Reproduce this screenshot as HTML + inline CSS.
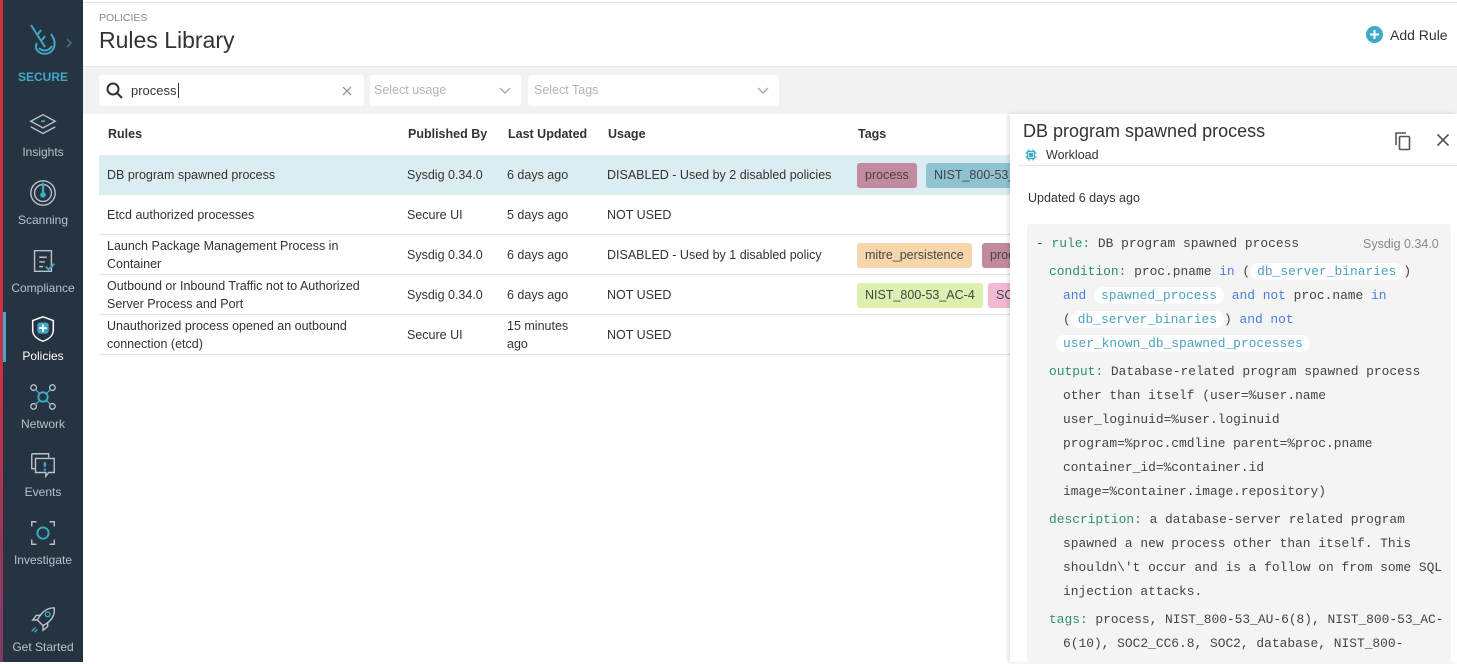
<!DOCTYPE html>
<html><head><meta charset="utf-8"><style>
*{box-sizing:border-box;margin:0;padding:0}
body{width:1457px;height:662px;overflow:hidden;font-family:"Liberation Sans",sans-serif;background:#fff;position:relative;color:#333}
.strip{position:absolute;left:0;top:0;width:3px;height:662px;background:linear-gradient(#d2303f,#c8304a 60%,#7a3a6a)}
.side{position:absolute;left:3px;top:0;width:80px;height:662px;background:#263442}
.nav{position:absolute;left:0;width:80px;text-align:center;color:#b8c2cc;font-size:12px}
.nav svg{display:block;margin:0 auto 5px}
.act{position:absolute;left:0;top:312px;width:3px;height:50px;background:#3fa9c8}
.t{position:absolute;white-space:nowrap}
.band{position:absolute;left:83px;top:66px;width:1374px;height:48px;background:#f2f2f2;border-top:1px solid #e6e6e6}
.inp{position:absolute;top:75px;height:31px;background:#fff;border-radius:3px}
.row{position:absolute;left:99px;width:911px;height:40px;border-bottom:1px solid #e3e3e3}
.c{position:absolute;font-size:12.5px;line-height:18px;white-space:nowrap}
.tag{position:absolute;height:25px;border-radius:3px;font-size:12.5px;line-height:25px;padding:0 8px;color:#444;white-space:nowrap;overflow:hidden}
.panel{position:absolute;left:1010px;top:114px;width:447px;height:548px;background:#fff;box-shadow:-2px 0 4px rgba(0,0,0,.12)}
.code{position:absolute;left:17px;top:110px;width:424px;height:440px;background:#f4f4f4;border-radius:3px;font-family:"Liberation Mono",monospace;font-size:12.9px;color:#444}
.code div{position:absolute;white-space:nowrap;line-height:24px}
.k{color:#2f8f6f}.b{color:#4a7ee0}.p{color:#4aa3c0;background:#fff;border-radius:10px;padding:1px 7px}
</style></head><body>
<div class="strip"></div>
<div class="side">
 <svg style="position:absolute;left:22px;top:20px" width="40" height="40" viewBox="0 0 40 40" fill="none" stroke="#3fa9c8" stroke-width="2"><path d="M6 5 L20 27"/><path d="M13 14 L16 10 M17 20 L20 16"/><path d="M12 23 C8 30 16 36 24 33 C30 30 32 22 26 14"/><path d="M14 28 C18 32 24 31 27 26"/></svg>
 <svg style="position:absolute;left:62px;top:37px" width="8" height="12"><path d="M2 2 L6 6 L2 10" stroke="#3f6f88" stroke-width="1.6" fill="none"/></svg>
 <div class="t" style="left:0;width:80px;text-align:center;top:70px;color:#3fa9c8;font-weight:bold;font-size:12px">SECURE</div>
 <div class="nav" style="top:110px"><svg width="30" height="30" viewBox="0 0 32 32" fill="none" stroke="#b8c2cc" stroke-width="1.5"><path d="M16 5 L29 12 L16 19 L3 12Z"/><path d="M3 18 L16 25 L29 18"/><path d="M14 11 h4 v2 h-4z" fill="#3fa9c8" stroke="none"/></svg>Insights</div>
 <div class="nav" style="top:178px"><svg width="30" height="30" viewBox="0 0 32 32" fill="none" stroke="#b8c2cc" stroke-width="1.5"><circle cx="16" cy="16" r="13"/><circle cx="16" cy="16" r="9"/><path d="M16 5 V17" stroke="#3fa9c8" stroke-width="2.5"/><circle cx="16" cy="18" r="3" fill="#3fa9c8" stroke="none"/></svg>Scanning</div>
 <div class="nav" style="top:246px"><svg width="30" height="30" viewBox="0 0 32 32" fill="none" stroke="#b8c2cc" stroke-width="1.5"><path d="M7 5 H25 V27 H7Z"/><path d="M12 12 H20 M12 17 H18 M12 22 H16"/><path d="M19 22 L22 25 L28 19" stroke="#3fa9c8" stroke-width="2"/></svg>Compliance</div>
 <div class="act"></div>
 <div class="nav" style="top:314px;color:#fff"><svg width="30" height="30" viewBox="0 0 32 32" fill="none" stroke="#fff" stroke-width="1.6"><path d="M16 3 L27 7 V17 C27 23 22 27 16 29 C10 27 5 23 5 17 V7Z"/><rect x="10" y="9" width="12" height="12" rx="3" fill="#3fa9c8" stroke="none"/><path d="M16 11 V19 M12 15 H20" stroke="#fff" stroke-width="2"/></svg>Policies</div>
 <div class="nav" style="top:382px"><svg width="30" height="30" viewBox="0 0 32 32" fill="none" stroke="#b8c2cc" stroke-width="1.4"><circle cx="6" cy="6" r="3"/><circle cx="26" cy="6" r="3"/><circle cx="6" cy="26" r="3"/><circle cx="26" cy="26" r="3"/><circle cx="16" cy="16" r="5" stroke="#3fa9c8" stroke-width="2"/><path d="M8 8 L12 12 M24 8 L20 12 M8 24 L12 20 M24 24 L20 20" stroke="#3fa9c8"/></svg>Network</div>
 <div class="nav" style="top:450px"><svg width="30" height="30" viewBox="0 0 32 32" fill="none" stroke="#b8c2cc" stroke-width="1.5"><path d="M4 4 H22 V8"/><path d="M4 4 V20 H8"/><path d="M8 9 H28 V24 H22 L19 28 V24 H8Z"/><path d="M18 13 V18" stroke="#3fa9c8" stroke-width="2.5"/><circle cx="18" cy="21" r="1.3" fill="#3fa9c8" stroke="none"/></svg>Events</div>
 <div class="nav" style="top:518px"><svg width="30" height="30" viewBox="0 0 32 32" fill="none" stroke="#b8c2cc" stroke-width="1.5"><path d="M4 9 V4 H9 M23 4 H28 V9 M28 23 V28 H23 M9 28 H4 V23"/><circle cx="16" cy="16" r="6" stroke="#3fa9c8" stroke-width="2"/></svg>Investigate</div>
 <div class="nav" style="top:605px"><svg width="30" height="30" viewBox="0 0 32 32" fill="none" stroke="#b8c2cc" stroke-width="1.5"><path d="M28 3 C20 3 14 8 10 16 L16 22 C24 18 29 12 28 3Z"/><circle cx="21" cy="10" r="2.5" stroke="#3fa9c8"/><path d="M10 16 L5 16 L9 11 H14 M16 22 V27 L21 23 V18"/><path d="M4 28 L8 24 M7 29 L10 26" stroke="#3fa9c8"/></svg>Get Started</div>
</div>

<div style="position:absolute;left:83px;top:2px;width:1374px;height:1px;background:#e3e3e3"></div>
<div class="t" style="left:99px;top:12px;font-size:10.5px;color:#888">POLICIES</div>
<div class="t" style="left:99px;top:27px;font-size:23px;color:#333">Rules Library</div>
<svg style="position:absolute;left:1366px;top:26px" width="17" height="17"><circle cx="8.5" cy="8.5" r="8.5" fill="#3fa9c8"/><path d="M8.5 4 V13 M4 8.5 H13" stroke="#fff" stroke-width="2"/></svg>
<div class="t" style="left:1390px;top:27px;font-size:14px;color:#333">Add Rule</div>

<div class="band"></div>
<div class="inp" style="left:99px;width:265px"></div>
<svg style="position:absolute;left:106px;top:82px" width="18" height="18" fill="none" stroke="#333" stroke-width="2"><circle cx="7" cy="7" r="5.5"/><path d="M11 11 L16 16"/></svg>
<div class="t" style="left:131px;top:83px;font-size:13px;color:#333">process<span style="border-left:1px solid #333;margin-left:1px"></span></div>
<svg style="position:absolute;left:342px;top:86px" width="10" height="10"><path d="M1 1 L9 9 M9 1 L1 9" stroke="#888" stroke-width="1.2"/></svg>
<div class="inp" style="left:370px;width:151px"></div>
<div class="t" style="left:374px;top:83px;font-size:12.5px;color:#b5b5b5">Select usage</div>
<svg style="position:absolute;left:499px;top:87px" width="12" height="8"><path d="M1 1 L6 6 L11 1" stroke="#aaa" stroke-width="1.4" fill="none"/></svg>
<div class="inp" style="left:528px;width:251px"></div>
<div class="t" style="left:534px;top:83px;font-size:12.5px;color:#b5b5b5">Select Tags</div>
<svg style="position:absolute;left:757px;top:87px" width="12" height="8"><path d="M1 1 L6 6 L11 1" stroke="#aaa" stroke-width="1.4" fill="none"/></svg>

<div class="t" style="left:108px;top:127px;font-size:12.5px;font-weight:bold;color:#333">Rules</div>
<div class="t" style="left:408px;top:127px;font-size:12.5px;font-weight:bold;color:#333">Published By</div>
<div class="t" style="left:508px;top:127px;font-size:12.5px;font-weight:bold;color:#333">Last Updated</div>
<div class="t" style="left:608px;top:127px;font-size:12.5px;font-weight:bold;color:#333">Usage</div>
<div class="t" style="left:858px;top:127px;font-size:12.5px;font-weight:bold;color:#333">Tags</div>

<div class="row" style="top:155px;background:#dcedf1;border-bottom:none"></div>
<div class="row" style="top:195px"></div>
<div class="row" style="top:235px"></div>
<div class="row" style="top:275px"></div>
<div class="row" style="top:315px"></div>

<div class="c" style="left:107px;top:166px">DB program spawned process</div>
<div class="c" style="left:407px;top:166px">Sysdig 0.34.0</div>
<div class="c" style="left:507px;top:166px">6 days ago</div>
<div class="c" style="left:607px;top:166px">DISABLED - Used by 2 disabled policies</div>
<div class="tag" style="left:857px;top:163px;background:#c3899e">process</div>
<div class="tag" style="left:926px;top:163px;background:#8fc3d1;width:84px;border-radius:3px 0 0 3px">NIST_800-53_AU</div>

<div class="c" style="left:107px;top:206px">Etcd authorized processes</div>
<div class="c" style="left:407px;top:206px">Secure UI</div>
<div class="c" style="left:507px;top:206px">5 days ago</div>
<div class="c" style="left:607px;top:206px">NOT USED</div>

<div class="c" style="left:107px;top:237px">Launch Package Management Process in<br>Container</div>
<div class="c" style="left:407px;top:246px">Sysdig 0.34.0</div>
<div class="c" style="left:507px;top:246px">6 days ago</div>
<div class="c" style="left:607px;top:246px">DISABLED - Used by 1 disabled policy</div>
<div class="tag" style="left:857px;top:243px;background:#f8d6ac">mitre_persistence</div>
<div class="tag" style="left:982px;top:243px;background:#c3899e;width:28px;border-radius:3px 0 0 3px">process</div>

<div class="c" style="left:107px;top:277px">Outbound or Inbound Traffic not to Authorized<br>Server Process and Port</div>
<div class="c" style="left:407px;top:286px">Sysdig 0.34.0</div>
<div class="c" style="left:507px;top:286px">6 days ago</div>
<div class="c" style="left:607px;top:286px">NOT USED</div>
<div class="tag" style="left:857px;top:283px;background:#def0b0">NIST_800-53_AC-4</div>
<div class="tag" style="left:988px;top:283px;background:#f3b8d3;width:22px;border-radius:3px 0 0 3px">SOC2</div>

<div class="c" style="left:107px;top:317px">Unauthorized process opened an outbound<br>connection (etcd)</div>
<div class="c" style="left:407px;top:326px">Secure UI</div>
<div class="c" style="left:507px;top:317px">15 minutes<br>ago</div>
<div class="c" style="left:607px;top:326px">NOT USED</div>

<div class="panel">
 <div class="t" style="left:13px;top:7px;font-size:18px;color:#333">DB program spawned process</div>
 <svg style="position:absolute;left:15px;top:35px" width="12" height="12" fill="none" stroke="#3fa9c8" stroke-width="1.3"><rect x="2.5" y="2.5" width="7" height="7"/><rect x="4.5" y="4.5" width="3" height="3" fill="#3fa9c8"/><path d="M4 0.5V2.5M8 0.5V2.5M4 9.5V11.5M8 9.5V11.5M0.5 4H2.5M0.5 8H2.5M9.5 4H11.5M9.5 8H11.5"/></svg>
 <div class="t" style="left:36px;top:34px;font-size:12.5px;color:#333">Workload</div>
 <svg style="position:absolute;left:384px;top:17px" width="18" height="20" fill="none" stroke="#555" stroke-width="1.6"><path d="M2 14 V2 H12"/><rect x="5.5" y="5.5" width="10" height="13" rx="1"/></svg>
 <svg style="position:absolute;left:426px;top:19px" width="14" height="14"><path d="M1.5 1.5 L12.5 12.5 M12.5 1.5 L1.5 12.5" stroke="#555" stroke-width="1.6"/></svg>
 <div style="position:absolute;left:8px;top:51px;width:439px;height:1px;background:#e6e6e6"></div>
 <div class="t" style="left:18px;top:77px;font-size:12.5px;color:#333">Updated 6 days ago</div>
 <div class="code">
  <div style="left:9px;top:8px">- <span class="k">rule:</span> DB program spawned process</div>
  <div style="left:336px;top:8px;font-family:'Liberation Sans',sans-serif;font-size:12.5px;color:#888">Sysdig 0.34.0</div>
  <div style="left:22px;top:36px"><span class="k">condition:</span> proc.pname <span class="b">in</span> (<span class="p">db_server_binaries</span>)</div>
  <div style="left:36px;top:60px"><span class="b">and</span> <span class="p">spawned_process</span> <span class="b">and not</span> proc.name <span class="b">in</span></div>
  <div style="left:36px;top:84px">(<span class="p">db_server_binaries</span>) <span class="b">and not</span></div>
  <div style="left:36px;top:108px;margin-left:-7px"><span class="p">user_known_db_spawned_processes</span></div>
  <div style="left:22px;top:136px"><span class="k">output:</span> Database-related program spawned process</div>
  <div style="left:36px;top:160px">other than itself (user=%user.name</div>
  <div style="left:36px;top:184px">user_loginuid=%user.loginuid</div>
  <div style="left:36px;top:208px">program=%proc.cmdline parent=%proc.pname</div>
  <div style="left:36px;top:232px">container_id=%container.id</div>
  <div style="left:36px;top:256px">image=%container.image.repository)</div>
  <div style="left:22px;top:284px"><span class="k">description:</span> a database-server related program</div>
  <div style="left:36px;top:308px">spawned a new process other than itself. This</div>
  <div style="left:36px;top:332px">shouldn\'t occur and is a follow on from some SQL</div>
  <div style="left:36px;top:356px">injection attacks.</div>
  <div style="left:22px;top:384px"><span class="k">tags:</span> process, NIST_800-53_AU-6(8), NIST_800-53_AC-</div>
  <div style="left:36px;top:408px">6(10), SOC2_CC6.8, SOC2, database, NIST_800-</div>
 </div>
</div>
</body></html>
